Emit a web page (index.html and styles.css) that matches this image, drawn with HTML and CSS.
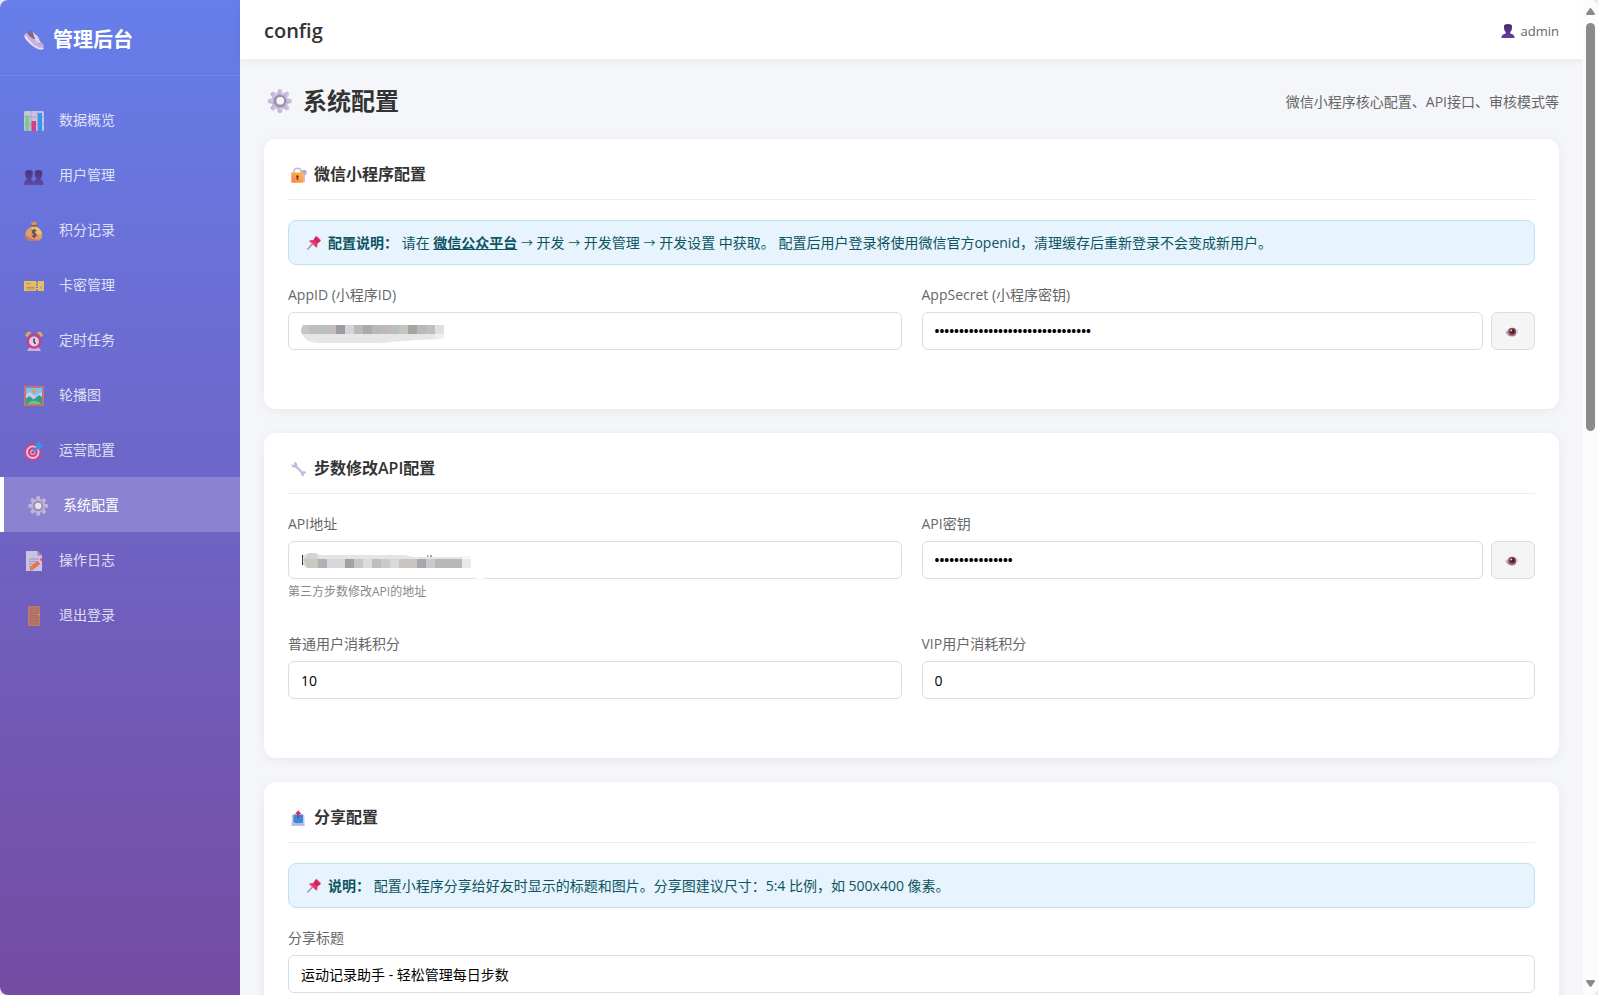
FILE: index.html
```html
<!DOCTYPE html>
<html lang="zh-CN">
<head>
<meta charset="utf-8">
<title>管理后台 - 系统配置</title>
<link rel="stylesheet" href="styles.css">
</head>
<body>
<svg class="sprite" aria-hidden="true">
  <defs>
    <linearGradient id="metal" x1="0" y1="1" x2="1" y2="0"><stop offset="0" stop-color="#b3a6c6"/><stop offset="1" stop-color="#ddd2ea"/></linearGradient>
    <linearGradient id="gold" x1="0" y1="1" x2="1" y2="0"><stop offset="0" stop-color="#ff7a52"/><stop offset="1" stop-color="#ffc13b"/></linearGradient>
    <linearGradient id="person" x1="0" y1="0" x2="0" y2="1"><stop offset="0" stop-color="#432a70"/><stop offset="1" stop-color="#61419a"/></linearGradient>
  </defs>
  <symbol id="i-gear" viewBox="0 0 20 20">
    <g fill="url(#metal)">
      <circle cx="10" cy="10" r="7"/>
      <rect x="8" y="0" width="4" height="5" rx="1.7"/><rect x="8" y="15" width="4" height="5" rx="1.7"/><rect x="0" y="8" width="5" height="4" rx="1.7"/><rect x="15" y="8" width="5" height="4" rx="1.7"/>
      <g transform="rotate(45 10 10)"><rect x="8" y="0" width="4" height="5" rx="1.7"/><rect x="8" y="15" width="4" height="5" rx="1.7"/><rect x="0" y="8" width="5" height="4" rx="1.7"/><rect x="15" y="8" width="5" height="4" rx="1.7"/></g>
    </g>
    <circle cx="10" cy="10" r="4.300" fill="none" stroke="#9a90a8" stroke-width="2"/>
    <circle class="gear-hole" cx="10.300" cy="9.800" r="3.100"/>
  </symbol>
  <symbol id="i-pin" viewBox="0 0 14 14">
    <path d="M.4 13.6 5.4 8" stroke="#9a8fa8" stroke-width="1.3"/>
    <path d="M8.4.6c.5-.6 1.300-.6 1.800-.1l3.300 3.300c.5.500.4 1.300-.2 1.700l-2.800 1.800-.2 3.100c0 .9-.9 1.300-1.600.7L2.600 5.800c-.6-.6-.2-1.500.7-1.600l3.100-.3z" fill="#e8336d"/>
    <path d="m8.600 1 4.300 4.600-2.500 1.600-3.600-3.300z" fill="#c4265f"/>
    <path d="m3 4.900 5.900 6.200" stroke="#f5648a" stroke-width=".9"/>
  </symbol>
  <symbol id="i-eye" viewBox="0 0 14 10">
    <path d="M.3 5C2 2 4.500.8 7.200.8S12.300 2 13.700 4.600C12.300 7.800 10 9.500 7 9.500S1.500 8 .3 5z" fill="#ded8e6"/>
    <path d="M.6 5.200C2 8 4 9.500 7 9.500c2 0 3.500-.7 4.500-1.800C9 9 5 8.500 3.500 3z" fill="#b3a1cf"/>
    <circle cx="7.200" cy="4.700" r="4" fill="#96504a"/><circle cx="7.300" cy="4.400" r="2.400" fill="#45192c"/><circle cx="6.300" cy="3.600" r="1" fill="#e8d5dc"/>
  </symbol>
</svg>

<div class="app">
  <aside class="sidebar">
    <div class="brand">
      <svg class="icon-20" viewBox="0 0 20 20" aria-hidden="true">
        <path d="M.8 4.500 3 2.500l2.500 1L8 .3l1.500.9 1.500 3 3.500 2.500 1.500 4.500 2.500 2c1.500 1.500 1.500 4 .8 5.300L15 19 5 11z" fill="#c9b3de"/>
        <path d="M.8 4.500C0 6 .3 7.800 2 9.800c3.500 4.200 8 8 13 9.700h3.500c.9-.2 1.200-.9 1-1.600-4.500.3-8-1.500-11.500-5S3.500 7.500.8 4.500z" fill="#f0dcf7"/>
        <path d="M3 2.500 8 .3l1.500.9-.5 2.500L12 8.500 9.500 9 5 6z" fill="#7d6a95"/>
        <path d="m9.500 4.500 3 1.200-2.500.8 3.500 1.200-2.500 1 3.500.9-2 1.400 3.300.4-1.500 1.500" fill="none" stroke="#efe6f7" stroke-width=".9"/>
        <path d="M14.500 14.500c1.500-1 3-.8 4.300.5" fill="none" stroke="#a98fc9" stroke-width="1"/>
      </svg>
      <h2 class="brand-name">管理后台</h2>
    </div>
    <nav class="nav" aria-label="主导航">
      <a class="nav-item" href="#dashboard">
        <svg class="icon-20" viewBox="0 0 20 20" aria-hidden="true"><rect width="20" height="20" rx="1.500" fill="#d9d0e4"/><path d="M0 6h20M0 13h20M7 0v20M13.500 0v20" stroke="#aaa2bd" stroke-width=".7"/><rect x="1.200" y="4.500" width="4" height="15.500" fill="#7fdb7a"/><rect x="7.500" y="10" width="4.500" height="10" fill="#e9347d"/><rect x="14" y="2" width="4" height="18" fill="#2d9cf0"/></svg>
        <span>数据概览</span>
      </a>
      <a class="nav-item" href="#users">
        <svg class="icon-20" viewBox="0 0 20 20" aria-hidden="true"><g fill="url(#person)" transform="translate(0 2)"><path d="M1.200 4.500C1.200 2.800 2.800 2 5 2s3.800.8 3.800 2.500c0 2.700-.2 5-1.600 6v1.300C9 12.300 10 13.500 10 17H0c0-3.500 1-4.700 2.800-5.200v-1.300c-1.400-1-1.600-3.300-1.600-6z"/><path d="M10.700 4.500c0-1.700 1.600-2.500 3.800-2.500s3.800.8 3.800 2.500c0 2.700-.2 5-1.600 6v1.300c1.800.5 2.600 1.700 2.600 5.200H9.500c0-3.500 1-4.700 2.800-5.200v-1.300c-1.400-1-1.600-3.300-1.600-6z"/></g></svg>
        <span>用户管理</span>
      </a>
      <a class="nav-item" href="#points">
        <svg class="icon-20" viewBox="0 0 20 20" aria-hidden="true"><path d="M7 .8 8.800 1.400 10 .2l1.300 1.200L13 .8 12.300 4H8z" fill="#f59a3c"/><path d="M7.500 5.500C4 7 1.300 10 1.300 14c0 4 3 6 8.700 6s8.200-2 8.200-6c0-4-2.700-7-6.200-8.500z" fill="#f3a653"/><path d="M8 5.500C5.500 7 14.500 17 17.800 12.500 17 9 14.500 6.600 12 5.500z" fill="#fbcf5b"/><path d="M1.300 13c0 5 3 7 8.700 7 3 0 5-.5 6.500-1.600C9 19 4 17 1.300 13z" fill="#dc7350"/><rect x="7" y="4" width="6" height="1.600" rx=".8" fill="#8b4b56"/><path d="M12.200 10.200c-.5-1-3.900-1.300-3.900.7 0 1.700 3.900 1.200 3.900 3.100 0 2-3.700 1.700-4.300.4M10.200 8v9.300" fill="none" stroke="#5e3b48" stroke-width="1.300"/></svg>
        <span>积分记录</span>
      </a>
      <a class="nav-item" href="#cards">
        <svg class="icon-20" viewBox="0 0 20 20" aria-hidden="true"><path d="M0 5h20v10H0z" fill="#f7cc52"/><path d="M13 5v10" stroke="#6f6bc9" stroke-width="1.800" stroke-dasharray="1.500 1.300"/><path d="M2.500 7.700h4M2.500 11.300h8M2.500 13h8M17 12.500v-2" stroke="#d58d55" stroke-width="1.200"/></svg>
        <span>卡密管理</span>
      </a>
      <a class="nav-item" href="#tasks">
        <svg class="icon-20" viewBox="0 0 20 20" aria-hidden="true"><path d="M3 20 5.500 16h9l2.500 4z" fill="#d9bde8"/><path d="M1.500 4.500C1.500 1.500 5 0 7.500 1.200L3 6.200zM18.800 4.500c0-3-3.500-4.500-6-3.300l4.500 5z" fill="#f3b54a"/><circle cx="10" cy="10.500" r="7.300" fill="#ee2f6c"/><circle cx="10" cy="10.500" r="5" fill="#e9e2f1"/><path d="M10 7.500v3.500l1.600 1.800" fill="none" stroke="#3f2c56" stroke-width="1.500"/></svg>
        <span>定时任务</span>
      </a>
      <a class="nav-item" href="#banners">
        <svg class="icon-20" viewBox="0 0 20 20" aria-hidden="true"><rect width="20" height="20" rx=".6" fill="#cb7b62"/><rect x="2" y="2" width="16" height="16" fill="#82d0f6"/><path d="M2 8.500 6 6l4.500 4L18 6v7H2z" fill="#e4d9f5"/><circle cx="10.300" cy="5.200" r="1.900" fill="#f6a928"/><path d="M2 12.500 5.500 10l4 3.500L15 9l3 2v7H2z" fill="#28a882"/><path d="M3.500 18c2-4 10-4.500 13.500 0z" fill="#78cf75"/></svg>
        <span>轮播图</span>
      </a>
      <a class="nav-item" href="#operation">
        <svg class="icon-20" viewBox="0 0 20 20" aria-hidden="true"><circle cx="8.800" cy="11.200" r="8.700" fill="#e63b72"/><circle cx="8.800" cy="11.200" r="5.800" fill="none" stroke="#ead9ea" stroke-width="1.900"/><circle cx="8.800" cy="11.200" r="2.500" fill="#f3e3ee"/><circle cx="8.800" cy="11.200" r="1.500" fill="#d52b69"/><path d="m9 11 5-5" stroke="#2f9df0" stroke-width="2"/><path d="m11.500 8.500.3-4.700L15.500.5l.9 3 3.300 1-3.300 3.300-4.400 1.400z" fill="#2f9df0"/></svg>
        <span>运营配置</span>
      </a>
      <a class="nav-item nav-item-active" href="#config" aria-current="page">
        <svg class="icon-20" aria-hidden="true"><use href="#i-gear"/></svg>
        <span>系统配置</span>
      </a>
      <a class="nav-item" href="#logs">
        <svg class="icon-20" viewBox="0 0 20 20" aria-hidden="true"><path d="M2 0h11.500L18 4.500V20H2z" fill="#dcd3e8"/><path d="M13.500 0 18 4.500h-4.500z" fill="#9f8fb8"/><path d="M5 8h9.500M5 10.500h9.500M5 13h5.500M5 15.500h3" stroke="#a597b8" stroke-width=".9"/><path d="m6.500 15.800 7.300-6 2.700 3L8.800 19l-3.300.6z" fill="#f47c3c"/><path d="m13.800 9.800 1.800-1.500 2.700 3-1.800 1.500z" fill="#e6d5e8"/><path d="m15.600 8.300 1.300-.9c1.600.1 2.700 1.300 2.600 2.900l-1.200 1z" fill="#ef3d67"/></svg>
        <span>操作日志</span>
      </a>
      <a class="nav-item" href="#logout">
        <svg class="icon-20" viewBox="0 0 20 20" aria-hidden="true"><rect x="4" width="12" height="20" rx=".6" fill="#cc8060"/><g fill="#c27a5c" stroke="#a9644e" stroke-width=".6"><rect x="6" y="2" width="8" height="5.500"/><rect x="6" y="9.300" width="8" height="3.500"/><rect x="6" y="14.600" width="8" height="3.500"/></g><circle cx="14.700" cy="8.600" r=".9" fill="#f5a63c"/></svg>
        <span>退出登录</span>
      </a>
    </nav>
  </aside>

  <div class="main">
    <header class="topbar">
      <h1 class="topbar-title">config</h1>
      <div class="account">
        <svg class="icon-14" viewBox="0 0 14 14" aria-hidden="true"><path d="M3 2.300C3 .8 4.500 0 7 0s4 .8 4 2.300c0 2.700-.2 4.500-1.700 5.700v1.600c2.200.5 4.200 1.400 4.400 4.400H.3c.2-3 2.200-3.900 4.400-4.400V8C3.200 6.800 3 5 3 2.300z" fill="url(#person)"/></svg>
        <span>admin</span>
      </div>
    </header>

    <main class="content">
      <div class="page-head">
        <h2 class="page-title"><svg class="icon-24" aria-hidden="true"><use href="#i-gear"/></svg>系统配置</h2>
        <p class="page-desc">微信小程序核心配置、API接口、审核模式等</p>
      </div>

      <section class="card">
        <h3 class="card-title">
          <svg class="icon-16" viewBox="0 0 16 16" aria-hidden="true"><path d="M3 7V4.200C3 .2 10 .2 10 4.200V7" fill="none" stroke="#c6b9d6" stroke-width="1.600"/><circle cx="13" cy="5.500" r="2.700" fill="#b7a9cd"/><path d="M12.300 7h1.600v8h-2z" fill="#c3b4da"/><rect x=".3" y="5.500" width="12" height="10.300" rx=".7" fill="url(#gold)"/><path d="M6.400 8.200a1.300 1.300 0 0 1 .8 2.300v2.300H5.700v-2.300a1.300 1.300 0 0 1 .7-2.300z" fill="#553344"/></svg>
          微信小程序配置
        </h3>
        <p class="notice"><svg class="icon-14" aria-hidden="true"><use href="#i-pin"/></svg><span><strong>配置说明：</strong> 请在 <a href="#wechat">微信公众平台</a> <span class="arrow">→</span> 开发 <span class="arrow">→</span> 开发管理 <span class="arrow">→</span> 开发设置 中获取。 配置后用户登录将使用微信官方openid，清理缓存后重新登录不会变成新用户。</span></p>
        <div class="form-row">
          <div class="field">
            <label for="appid">AppID (小程序ID)</label>
            <div class="masked">
              <input id="appid" type="text">
              <svg class="mask" width="144" height="19" aria-hidden="true">
                <clipPath id="m1"><path d="M3 0h141v14l-28 1-36 3H18C8 18 1 12 1 5z"/></clipPath>
                <g transform="translate(0 1)"><g clip-path="url(#m1)">
                  <path fill="#e6e6e8" d="M0 9h144v9H0z"/><path fill="#f0f0f3" d="M135 9h9v9h-9z"/>
                  <path fill="#c6c4c4" d="M0 0h9v9H0z"/><path fill="#bdbfbf" d="M9 0h18v9H9z"/><path fill="#c3bdb9" d="M27 0h9v9h-9z"/><path fill="#9b9ba1" d="M36 0h9v9h-9z"/><path fill="#d3d6d5" d="M45 0h9v9h-9z"/><path fill="#bfb7b3" d="M54 0h9v9h-9z"/><path fill="#a8acb0" d="M63 0h9v9h-9z"/><path fill="#b5b9bb" d="M72 0h9v9h-9z"/><path fill="#bfb8b5" d="M81 0h9v9h-9z"/><path fill="#bbbdbf" d="M90 0h9v9h-9z"/><path fill="#c5c5c0" d="M99 0h9v9h-9z"/><path fill="#a9a4a3" d="M108 0h9v9h-9z"/><path fill="#b4babc" d="M117 0h9v9h-9z"/><path fill="#bfbfc1" d="M126 0h9v9h-9z"/><path fill="#dfe0e3" d="M135 0h9v9h-9z"/>
                </g></g>
              </svg>
            </div>
          </div>
          <div class="field">
            <label for="secret">AppSecret (小程序密钥)</label>
            <div class="secret"><input id="secret" type="password" value="0123456789abcdef0123456789abcdef"><button type="button" aria-label="显示密钥"><svg class="icon-eye" aria-hidden="true"><use href="#i-eye"/></svg></button></div>
          </div>
        </div>
      </section>

      <section class="card">
        <h3 class="card-title">
          <svg class="icon-16" viewBox="0 0 16 16" aria-hidden="true"><path d="m4 4.500 8 7.800" stroke="#cdbfe0" stroke-width="2.500"/><path d="M.4 3.200 1 5.500c1.200 1.500 3 1.300 4.300.3S6.600 2.500 5 1.200L3 .8l.9 2.300-1.200 1zM15.400 12.300l-1.200-1.700c-1.300-.8-2.700-.5-3.500.5s-.7 2.900.4 3.800l2 .4-.7-2 1-.9z" fill="#c2b4d6"/></svg>
          步数修改API配置
        </h3>
        <div class="form-row">
          <div class="field">
            <label for="apiurl">API地址</label>
            <div class="masked">
              <input id="apiurl" type="text">
              <svg class="mask" width="190" height="28" aria-hidden="true">
                <path d="M2.500 2v10" stroke="#2a1a1a" stroke-width="1"/><path d="M127 3h1.500M130 3h2" stroke="#554" stroke-width="1"/>
                <path d="M3 3c2-3 14-3 17-1h85l8 2h49v11H8C4 15 2 12 3 3z" fill="#e5e4e4"/><path d="M162 3h9v4h-9z" fill="#f6f6f8"/>
                <path d="M8 0h8l3 6H4z" fill="#d5d3d1"/><path fill="#c9c8c2" d="M3 6h15v9H7z"/><path fill="#afb1b4" d="M18 6h9v9h-9z"/><path fill="#d5d7da" d="M27 6h18v9H27z"/><path fill="#a3a1a3" d="M45 6h9v9h-9z"/><path fill="#c2c7cb" d="M54 6h9v9h-9z"/><path fill="#dfdad9" d="M63 6h9v9h-9z"/><path fill="#babfc2" d="M72 6h9v9h-9z"/><path fill="#cacacc" d="M81 6h9v9h-9z"/><path fill="#d8d9dc" d="M90 6h9v9h-9z"/><path fill="#c8c5c2" d="M99 6h18v9H99z"/><path fill="#a5a9ad" d="M117 6h9v9h-9z"/><path fill="#cacacc" d="M126 6h9v9h-9z"/><path fill="#b8b8b9" d="M135 6h27v9h-27z"/><path fill="#e9eaf0" d="M162 6h9v9h-9z"/>
                <path d="M176 24h8v4h-8z" fill="#fcfcfc"/>
              </svg>
            </div>
            <small>第三方步数修改API的地址</small>
          </div>
          <div class="field">
            <label for="apikey">API密钥</label>
            <div class="secret"><input id="apikey" type="password" value="0123456789abcdef"><button type="button" aria-label="显示密钥"><svg class="icon-eye" aria-hidden="true"><use href="#i-eye"/></svg></button></div>
          </div>
        </div>
        <div class="form-row">
          <div class="field">
            <label for="cost">普通用户消耗积分</label>
            <input id="cost" type="text" inputmode="numeric" value="10">
          </div>
          <div class="field">
            <label for="vipcost">VIP用户消耗积分</label>
            <input id="vipcost" type="text" inputmode="numeric" value="0">
          </div>
        </div>
      </section>

      <section class="card">
        <h3 class="card-title">
          <svg class="icon-16" viewBox="0 0 16 16" aria-hidden="true"><path d="M.7 5h1.800v7h9.200V5h1.800v10.700H.7z" fill="#d5c9e6"/><path d="M2.300 4.500h9.700v8L10 13.300H4.500L2.300 12.300z" fill="#2d8fe4"/><path d="M.7 12.700 3.500 14h7l3-1.300v3H.7z" fill="#c3b3da"/><path d="M7.200.2 10.300 4H8.400v4.300H6V4H4.100z" fill="#e02860"/></svg>
          分享配置
        </h3>
        <p class="notice"><svg class="icon-14" aria-hidden="true"><use href="#i-pin"/></svg><span><strong>说明：</strong> 配置小程序分享给好友时显示的标题和图片。分享图建议尺寸：5:4 比例，如 500x400 像素。</span></p>
        <div class="form-row form-row-single">
          <div class="field">
            <label for="sharetitle">分享标题</label>
            <input id="sharetitle" type="text" value="运动记录助手 - 轻松管理每日步数">
          </div>
        </div>
      </section>
    </main>
  </div>

  <div class="scrollbar" aria-hidden="true">
    <svg width="9" height="7" viewBox="0 0 9 7"><path d="M4.500 1 8 6H1z" fill="#8b8b8b" stroke="#8b8b8b" stroke-width="2" stroke-linejoin="round"/></svg>
    <div class="scroll-track"><div class="scroll-thumb"></div></div>
    <svg width="9" height="7" viewBox="0 0 9 7"><path d="M4.500 6 8 1H1z" fill="#8b8b8b" stroke="#8b8b8b" stroke-width="2" stroke-linejoin="round"/></svg>
  </div>
</div>
</body>
</html>
```
FILE: styles.css
```css
* { box-sizing: border-box; margin: 0; padding: 0; }

body {
  background: #e9eaec;
  color: #333;
  font-family: "Open Sans", "Noto Sans CJK SC", sans-serif;
  font-size: 14px;
}

.sprite { position: absolute; width: 0; height: 0; }

.app {
  display: flex;
  height: 100vh;
  overflow: hidden;
  border-radius: 8px;
  background: #f5f6fa;
}

.icon-14 { width: 14px; height: 14px; flex: none; }
.icon-16 { width: 16px; height: 16px; flex: none; }
.icon-20 { width: 20px; height: 20px; flex: none; }
.icon-24 { width: 24px; height: 24px; flex: none; }
.icon-eye { width: 14px; height: 10px; display: block; }
.gear-hole { fill: #f5f6fa; }

/* Sidebar */
.sidebar {
  flex: none;
  width: 240px;
  background: linear-gradient(180deg, #667eea 0%, #764ba2 100%);
  color: #fff;
}
.brand {
  display: flex;
  align-items: center;
  gap: 9px;
  padding: 26px 24px 22px;
  border-bottom: 1px solid rgba(255, 255, 255, .1);
}
.brand-name { font-size: 20px; line-height: 27px; }
.nav { padding: 16px 0; }
.nav-item {
  display: flex;
  align-items: center;
  gap: 15px;
  height: 55px;
  padding: 0 24px 2px;
  color: rgba(255, 255, 255, .8);
  text-decoration: none;
}
.nav-item .icon-20 { margin-top: 5px; opacity: .85; }
.nav-item-active {
  background: rgba(255, 255, 255, .2);
  border-left: 4px solid #fff;
  color: #fff;
}
.nav-item-active .gear-hole { fill: #8b84cf; }

/* Main column */
.main { flex: 1; min-width: 0; display: flex; flex-direction: column; }
.topbar {
  display: flex;
  align-items: center;
  justify-content: space-between;
  padding: 17px 24px 15px;
  background: #fff;
  box-shadow: 0 2px 10px rgba(0, 0, 0, .05);
}
.topbar-title { font-size: 20px; font-weight: 600; line-height: 27px; }
.account {
  display: flex;
  align-items: center;
  gap: 6px;
  color: #666;
  font-size: 13px;
  line-height: 20px;
}

.content { flex: 1; min-height: 0; overflow: hidden; padding: 24px; }
.page-head {
  display: flex;
  align-items: center;
  justify-content: space-between;
  margin-bottom: 20px;
}
.page-title {
  display: flex;
  align-items: center;
  gap: 11px;
  padding-left: 4px;
  font-size: 24px;
  line-height: 36px;
}
.page-desc { color: #666; }

/* Cards */
.card {
  margin-bottom: 24px;
  padding: 24px;
  border-radius: 12px;
  background: #fff;
  box-shadow: 0 2px 12px rgba(0, 0, 0, .06);
}
.card-title {
  display: flex;
  align-items: center;
  gap: 7px;
  margin-bottom: 20px;
  padding: 1px 3px 14px;
  border-bottom: 1px solid #eee;
  font-size: 16px;
  font-weight: 600;
  line-height: 21px;
}
.notice {
  display: flex;
  align-items: center;
  gap: 7px;
  margin-bottom: 20px;
  padding: 12px 18px;
  border: 1px solid #bee5eb;
  border-radius: 8px;
  background: #e7f3fd;
  color: #0c5460;
  line-height: 19px;
}
.notice a { color: inherit; font-weight: 700; }
.arrow { font-size: 12px; line-height: 1; }

/* Forms */
.form-row {
  display: grid;
  grid-template-columns: 1fr 1fr;
  gap: 20px;
  padding-bottom: 35px;
}
.form-row-single { grid-template-columns: 1fr; }
label {
  display: block;
  margin-bottom: 8px;
  color: #666;
  line-height: 19px;
}
input {
  display: block;
  width: 100%;
  height: 38px;
  padding: 0 12px;
  border: 1px solid #ddd;
  border-radius: 6px;
  background: #fff;
  color: #000;
  font: inherit;
}
input[type="password"] { font-size: 13px; font-weight: 700; }
small {
  display: block;
  margin-top: 5px;
  color: #888;
  font-size: 12px;
  line-height: 15px;
}
.secret { display: flex; gap: 8px; }
.secret input { flex: 1; min-width: 0; }
.secret button {
  display: grid;
  place-items: center;
  width: 44px;
  height: 38px;
  padding: 2px 2px 0 0;
  border: 1px solid #ddd;
  border-radius: 6px;
  background: #f5f5f5;
}
.masked { position: relative; }
.mask { position: absolute; left: 12px; top: 12px; }

/* Scrollbar */
.scrollbar {
  flex: none;
  display: flex;
  flex-direction: column;
  align-items: center;
  gap: 8px;
  width: 15px;
  padding: 8px 0;
  background: #fcfcfc;
}
.scroll-track { flex: 1; }
.scroll-thumb { width: 9px; height: 43%; border-radius: 5px; background: #8b8b8b; }
```
